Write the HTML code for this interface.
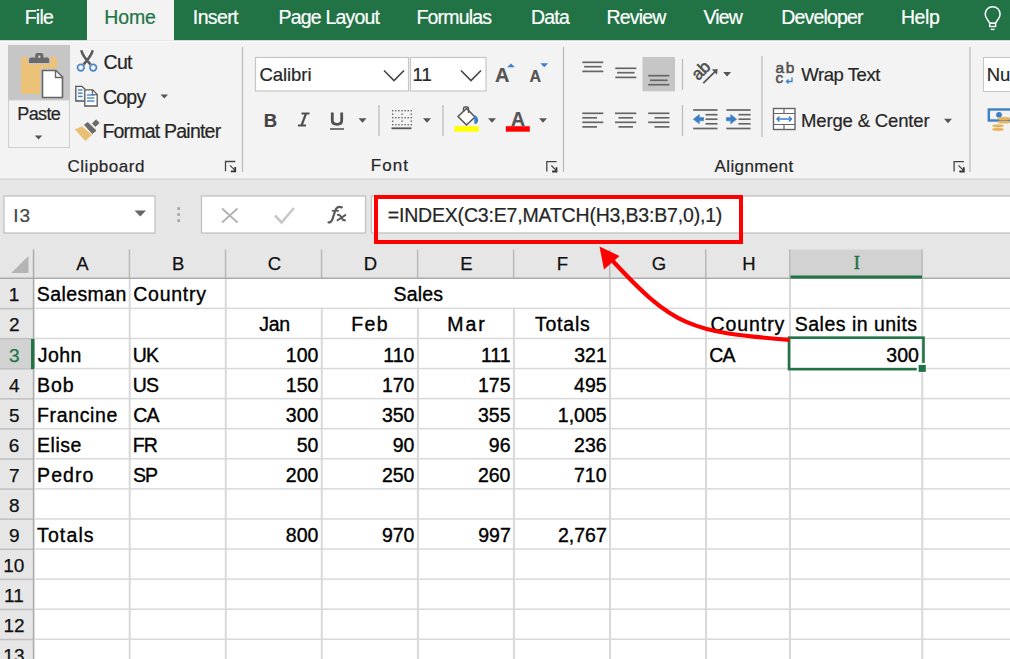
<!DOCTYPE html>
<html><head><meta charset="utf-8"><style>
html,body{margin:0;padding:0;}
body{width:1010px;height:659px;overflow:hidden;position:relative;background:#fff;font-family:"Liberation Sans",sans-serif;}
svg{position:absolute;left:0;top:0;}
.t{position:absolute;white-space:nowrap;line-height:normal;font-family:"Liberation Sans",sans-serif;-webkit-text-stroke-width:0.2px;}
#ov{position:absolute;left:0;top:0;width:1010px;height:659px;}
</style></head><body>
<svg width="1010" height="659" viewBox="0 0 1010 659">
<rect x="0" y="0" width="1010" height="40.6" fill="#217346" />
<rect x="87" y="0" width="87" height="40.6" fill="#f3f3f3" />
<rect x="0" y="40.6" width="1010" height="138.4" fill="#f3f3f3" />
<rect x="0" y="178.5" width="1010" height="1.5" fill="#d5d5d5" />
<rect x="0" y="180" width="1010" height="479" fill="#e6e6e6" />
<path d="M989.7 23.3 C988.5 20.2 985.2 18.2 985.2 14.3 C985.2 9.6 988.6 6.8 992.65 6.8 C996.7 6.8 1000.1 9.6 1000.1 14.3 C1000.1 18.2 996.8 20.2 995.6 23.3 Z" fill="none" stroke="#fff" stroke-width="1.5" stroke-linejoin="round"/>
<rect x="989.7" y="23.3" width="5.9" height="3.2" fill="none" stroke="#fff" stroke-width="1.4"/>
<line x1="990.8" y1="29.4" x2="994.6" y2="29.4" stroke="#fff" stroke-width="1.4" />
<rect x="0" y="40.6" width="1010" height="1.4" fill="#fbfbfb" />
<rect x="8" y="45" width="62" height="55" fill="#c6c6c6" />
<rect x="8.5" y="100" width="61" height="47.5" fill="#f3f3f3" stroke="#cfcfcf" stroke-width="1"/>
<rect x="21" y="57" width="36" height="37" rx="2" fill="#ebc277"/>
<path d="M29 63 L29 59.5 Q29 57.5 31 57.5 L35.2 57.5 L35.2 55 Q35.2 53 37.2 53 L41.4 53 Q43.4 53 43.4 55 L43.4 57.5 L47.2 57.5 Q49.2 57.5 49.2 59.5 L49.2 63 Z" fill="#c6c6c6" stroke="#c6c6c6" stroke-width="2.4"/>
<path d="M29 63 L29 59.5 Q29 57.5 31 57.5 L35.2 57.5 L35.2 55 Q35.2 53 37.2 53 L41.4 53 Q43.4 53 43.4 55 L43.4 57.5 L47.2 57.5 Q49.2 57.5 49.2 59.5 L49.2 63 Z" fill="#6a6a6a"/>
<circle cx="39.3" cy="56.8" r="1.2" fill="#d0d0d0"/>
<path d="M42.5 70.5 L56 70.5 L62.5 77 L62.5 97.5 L42.5 97.5 Z" fill="#fff" stroke="#c6c6c6" stroke-width="4.5" stroke-linejoin="round"/>
<path d="M42.5 70.5 L56 70.5 L62.5 77 L62.5 97.5 L42.5 97.5 Z" fill="#fff" stroke="#666" stroke-width="1.6" stroke-linejoin="round"/>
<path d="M55.5 70.5 L55.5 77.5 L62.5 77.5" fill="none" stroke="#666" stroke-width="1.4"/>
<path d="M34.75 135.5 L42.25 135.5 L38.5 139.5 Z" fill="#555"/>
<path d="M81.3 50.3 Q82.5 56 90.5 64.5 M92.7 50.3 Q91.5 56 83.5 64.5" stroke="#5a5a5a" stroke-width="2.6" fill="none"/>
<circle cx="80.8" cy="67.6" r="3.3" fill="none" stroke="#4a86c8" stroke-width="1.7"/>
<circle cx="93.2" cy="67.6" r="3.3" fill="none" stroke="#4a86c8" stroke-width="1.7"/>
<path d="M84.5 101 L75.8 101 L75.8 86.3 L82 86.3 L85 89.3" fill="none" stroke="#555" stroke-width="1.3"/>
<path d="M84.8 89.8 L92.6 89.8 L97.2 94.4 L97.2 106 L84.8 106 Z" fill="#fff" stroke="#555" stroke-width="1.3"/>
<path d="M92.3 89.8 L92.3 94.7 L97.2 94.7" fill="none" stroke="#555" stroke-width="1.1"/>
<line x1="78" y1="90" x2="82.5" y2="90" stroke="#3c7fc5" stroke-width="1.3" />
<line x1="78" y1="93.2" x2="82.5" y2="93.2" stroke="#3c7fc5" stroke-width="1.3" />
<line x1="78" y1="96.4" x2="82.5" y2="96.4" stroke="#3c7fc5" stroke-width="1.3" />
<line x1="86.8" y1="95" x2="94.4" y2="95" stroke="#3c7fc5" stroke-width="1.3" />
<line x1="86.8" y1="98" x2="94.4" y2="98" stroke="#3c7fc5" stroke-width="1.3" />
<line x1="86.8" y1="101" x2="94.4" y2="101" stroke="#3c7fc5" stroke-width="1.3" />
<path d="M160.55 94.5 L168.05 94.5 L164.3 98.5 Z" fill="#555"/>
<path d="M75.3 129.5 L82 126.8 L91.6 134.8 L85.5 140.8 Z" fill="#e9bf73" stroke="#e9bf73" stroke-width="0.8" stroke-linejoin="round"/>
<path d="M84.5 124.8 L87.8 122.6 L96 130.6 L92.3 133.5 Z" fill="#6a6a6a" stroke="#6a6a6a" stroke-width="1" stroke-linejoin="round"/>
<path d="M92.3 123.5 L96 119.8 L99.2 122.8 L95.4 126.6 Z" fill="#6a6a6a" stroke="#6a6a6a" stroke-width="0.8" stroke-linejoin="round"/>
<path d="M225.5 171.3 L225.5 161.5 L235.3 161.5" fill="none" stroke="#444" stroke-width="1.3"/>
<path d="M230 165.3 L234.8 170.2" fill="none" stroke="#444" stroke-width="1.2"/>
<path d="M235.2 167 L235.2 171.3 L230.8 171.3" fill="none" stroke="#333" stroke-width="1.8"/>
<line x1="242.5" y1="47" x2="242.5" y2="172" stroke="#bababa" stroke-width="1.2" />
<line x1="563.5" y1="47" x2="563.5" y2="172" stroke="#bababa" stroke-width="1.2" />
<line x1="970" y1="47" x2="970" y2="172" stroke="#bababa" stroke-width="1.2" />
<rect x="255.5" y="57.5" width="153" height="33.5" fill="#fff" stroke="#c6c6c6" stroke-width="1.2"/>
<rect x="410.5" y="57.5" width="75.5" height="33.5" fill="#fff" stroke="#c6c6c6" stroke-width="1.2"/>
<path d="M384 70.5 L394 80.5 L404 70.5" fill="none" stroke="#444" stroke-width="1.6"/>
<path d="M461 70.5 L471 80.5 L481 70.5" fill="none" stroke="#444" stroke-width="1.6"/>
<path d="M507.2 67.2 L511 63.4 L514.9 67.2 Z" fill="#3c7fc5"/>
<path d="M540.3 63.2 L548.2 63.2 L544.25 67.3 Z" fill="#3c7fc5"/>
<path d="M301.5 113.5 L309.5 113.5 M298 125.5 L306 125.5 M306 113.5 L301.5 125.5" stroke="#505050" stroke-width="2.2" fill="none"/>
<path d="M332.3 112.5 L332.3 120.5 Q332.3 124.3 337 124.3 Q341.7 124.3 341.7 120.5 L341.7 112.5" fill="none" stroke="#505050" stroke-width="2.8"/>
<line x1="330" y1="129" x2="344" y2="129" stroke="#555" stroke-width="1.6" />
<path d="M358.5 118.25 L366.5 118.25 L362.5 122.75 Z" fill="#555"/>
<line x1="379" y1="105" x2="379" y2="136" stroke="#bababa" stroke-width="1.2" />
<rect x="392.0" y="110" width="1.4" height="1.4" fill="#666" />
<rect x="395.1" y="110" width="1.4" height="1.4" fill="#666" />
<rect x="398.2" y="110" width="1.4" height="1.4" fill="#666" />
<rect x="401.3" y="110" width="1.4" height="1.4" fill="#666" />
<rect x="404.4" y="110" width="1.4" height="1.4" fill="#666" />
<rect x="407.5" y="110" width="1.4" height="1.4" fill="#666" />
<rect x="410.6" y="110" width="1.4" height="1.4" fill="#666" />
<rect x="392.0" y="117" width="1.4" height="1.4" fill="#666" />
<rect x="395.1" y="117" width="1.4" height="1.4" fill="#666" />
<rect x="398.2" y="117" width="1.4" height="1.4" fill="#666" />
<rect x="401.3" y="117" width="1.4" height="1.4" fill="#666" />
<rect x="404.4" y="117" width="1.4" height="1.4" fill="#666" />
<rect x="407.5" y="117" width="1.4" height="1.4" fill="#666" />
<rect x="410.6" y="117" width="1.4" height="1.4" fill="#666" />
<rect x="392.0" y="124" width="1.4" height="1.4" fill="#666" />
<rect x="395.1" y="124" width="1.4" height="1.4" fill="#666" />
<rect x="398.2" y="124" width="1.4" height="1.4" fill="#666" />
<rect x="401.3" y="124" width="1.4" height="1.4" fill="#666" />
<rect x="404.4" y="124" width="1.4" height="1.4" fill="#666" />
<rect x="407.5" y="124" width="1.4" height="1.4" fill="#666" />
<rect x="410.6" y="124" width="1.4" height="1.4" fill="#666" />
<rect x="392" y="113.5" width="1.4" height="1.4" fill="#666" />
<rect x="392" y="120.5" width="1.4" height="1.4" fill="#666" />
<rect x="401.3" y="113.5" width="1.4" height="1.4" fill="#666" />
<rect x="401.3" y="120.5" width="1.4" height="1.4" fill="#666" />
<rect x="410.6" y="113.5" width="1.4" height="1.4" fill="#666" />
<rect x="410.6" y="120.5" width="1.4" height="1.4" fill="#666" />
<line x1="391.5" y1="128.3" x2="411.5" y2="128.3" stroke="#555" stroke-width="1.8" />
<path d="M423.0 118.25 L431.0 118.25 L427 122.75 Z" fill="#555"/>
<line x1="443" y1="105" x2="443" y2="136" stroke="#bababa" stroke-width="1.2" />
<path d="M458 116.5 L466.5 108.5 L475 117 L466.5 125 Z" fill="#fff" stroke="#555" stroke-width="1.6" stroke-linejoin="round"/>
<path d="M463.5 112 L463.5 108.5 Q463.5 107 465 107 L467 107 Q468.5 107 468.5 108.5 L468.5 113" fill="none" stroke="#555" stroke-width="1.4"/>
<path d="M474 115 Q478.5 116 478 121.5 Q477 124.5 474.5 124 Z" fill="#3c7fc5"/>
<rect x="454.3" y="126.2" width="24.5" height="5.5" fill="#ffff00" />
<path d="M488.0 118.25 L496.0 118.25 L492 122.75 Z" fill="#555"/>
<rect x="505.8" y="126.2" width="24" height="5.5" fill="#ff0000" />
<path d="M539.0 118.25 L547.0 118.25 L543 122.75 Z" fill="#555"/>
<path d="M546.8 171.5 L546.8 161.7 L556.5999999999999 161.7" fill="none" stroke="#444" stroke-width="1.3"/>
<path d="M551.3 165.5 L556.0999999999999 170.39999999999998" fill="none" stroke="#444" stroke-width="1.2"/>
<path d="M556.5 167.2 L556.5 171.5 L552.0999999999999 171.5" fill="none" stroke="#333" stroke-width="1.8"/>
<line x1="582.3" y1="62.3" x2="603.3" y2="62.3" stroke="#666" stroke-width="1.7" />
<line x1="584.0999999999999" y1="66.7" x2="601.5" y2="66.7" stroke="#666" stroke-width="1.7" />
<line x1="582.3" y1="71.4" x2="603.3" y2="71.4" stroke="#666" stroke-width="1.7" />
<line x1="615.3" y1="68.3" x2="636.3" y2="68.3" stroke="#666" stroke-width="1.7" />
<line x1="617.0999999999999" y1="72.7" x2="634.5" y2="72.7" stroke="#666" stroke-width="1.7" />
<line x1="615.3" y1="77.4" x2="636.3" y2="77.4" stroke="#666" stroke-width="1.7" />
<rect x="642.5" y="57" width="32.5" height="34.3" fill="#c6c6c6" />
<line x1="648.2" y1="75.7" x2="669.4" y2="75.7" stroke="#666" stroke-width="1.7" />
<line x1="650.0" y1="80.3" x2="667.6" y2="80.3" stroke="#666" stroke-width="1.7" />
<line x1="648.2" y1="84.7" x2="669.4" y2="84.7" stroke="#666" stroke-width="1.7" />
<line x1="682.5" y1="59" x2="682.5" y2="90" stroke="#bababa" stroke-width="1.2" />
<g transform="translate(701.2 69.8) rotate(-45)"><text x="-10" y="5.8" font-family="Liberation Sans" font-size="17" fill="#505050" stroke="#505050" stroke-width="0.6" letter-spacing="-0.3">ab</text></g>
<path d="M703.3 83.2 L714.8 71.8" fill="none" stroke="#555" stroke-width="1.7"/>
<path d="M717.6 68.9 L711.8 69.5 L717 74.7 Z" fill="#555"/>
<path d="M723.1 72.05 L731.1 72.05 L727.1 76.55 Z" fill="#555"/>
<line x1="762" y1="56" x2="762" y2="137" stroke="#bababa" stroke-width="1.2" />
<path d="M792 77.5 L792 81.5 L786.5 81.5 M788.5 79.5 L786.5 81.5 L788.5 83.5" fill="none" stroke="#3c7fc5" stroke-width="1.3"/>
<line x1="582.3" y1="113.3" x2="603.3" y2="113.3" stroke="#666" stroke-width="1.7" />
<line x1="582.3" y1="117.8" x2="597" y2="117.8" stroke="#666" stroke-width="1.7" />
<line x1="582.3" y1="122.3" x2="603.3" y2="122.3" stroke="#666" stroke-width="1.7" />
<line x1="582.3" y1="126.9" x2="597" y2="126.9" stroke="#666" stroke-width="1.7" />
<line x1="615" y1="113.3" x2="636.3" y2="113.3" stroke="#666" stroke-width="1.7" />
<line x1="618.5" y1="117.8" x2="633" y2="117.8" stroke="#666" stroke-width="1.7" />
<line x1="615" y1="122.3" x2="636.3" y2="122.3" stroke="#666" stroke-width="1.7" />
<line x1="618.5" y1="126.9" x2="633" y2="126.9" stroke="#666" stroke-width="1.7" />
<line x1="648.2" y1="113.3" x2="669.4" y2="113.3" stroke="#666" stroke-width="1.7" />
<line x1="654.5" y1="117.8" x2="669.4" y2="117.8" stroke="#666" stroke-width="1.7" />
<line x1="648.2" y1="122.3" x2="669.4" y2="122.3" stroke="#666" stroke-width="1.7" />
<line x1="654.5" y1="126.9" x2="669.4" y2="126.9" stroke="#666" stroke-width="1.7" />
<line x1="682.5" y1="105" x2="682.5" y2="136" stroke="#bababa" stroke-width="1.2" />
<line x1="693.2" y1="110" x2="717.5" y2="110" stroke="#666" stroke-width="1.7" />
<line x1="693.2" y1="128.5" x2="717.5" y2="128.5" stroke="#666" stroke-width="1.7" />
<line x1="705.5" y1="114.7" x2="717.5" y2="114.7" stroke="#666" stroke-width="1.7" />
<line x1="705.5" y1="119.2" x2="717.5" y2="119.2" stroke="#666" stroke-width="1.7" />
<line x1="705.5" y1="123.8" x2="717.5" y2="123.8" stroke="#666" stroke-width="1.7" />
<path d="M693.3 119.2 L699.3 114.6 L699.3 117.6 L703.6 117.6 L703.6 120.8 L699.3 120.8 L699.3 123.8 Z" fill="#3c7fc5" stroke="#3c7fc5" stroke-width="0.6" stroke-linejoin="round"/>
<line x1="726.4" y1="110" x2="750.6" y2="110" stroke="#666" stroke-width="1.7" />
<line x1="726.4" y1="128.5" x2="750.6" y2="128.5" stroke="#666" stroke-width="1.7" />
<line x1="738.5" y1="114.7" x2="750.6" y2="114.7" stroke="#666" stroke-width="1.7" />
<line x1="738.5" y1="119.2" x2="750.6" y2="119.2" stroke="#666" stroke-width="1.7" />
<line x1="738.5" y1="123.8" x2="750.6" y2="123.8" stroke="#666" stroke-width="1.7" />
<path d="M736.7 119.2 L730.7 114.6 L730.7 117.6 L726.4 117.6 L726.4 120.8 L730.7 120.8 L730.7 123.8 Z" fill="#3c7fc5" stroke="#3c7fc5" stroke-width="0.6" stroke-linejoin="round"/>
<rect x="773.5" y="108.5" width="21.5" height="21" fill="#fff" stroke="#666" stroke-width="1.4"/>
<path d="M773.5 113.5 L795 113.5 M773.5 124.5 L795 124.5 M784 108.5 L784 113.5 M784 124.5 L784 129.5" fill="none" stroke="#666" stroke-width="1.2"/>
<path d="M777 119 L791.5 119 M779.5 116.5 L777 119 L779.5 121.5 M789 116.5 L791.5 119 L789 121.5" fill="none" stroke="#3c7fc5" stroke-width="1.4"/>
<path d="M944.0 118.75 L952.0 118.75 L948 123.25 Z" fill="#555"/>
<path d="M954.1 171.5 L954.1 161.7 L963.9 161.7" fill="none" stroke="#444" stroke-width="1.3"/>
<path d="M958.6 165.5 L963.4 170.39999999999998" fill="none" stroke="#444" stroke-width="1.2"/>
<path d="M963.8000000000001 167.2 L963.8000000000001 171.5 L959.4 171.5" fill="none" stroke="#333" stroke-width="1.8"/>
<rect x="983.5" y="57.5" width="40" height="34" fill="#fff" stroke="#c6c6c6" stroke-width="1"/>
<rect x="988.8" y="109.5" width="24" height="11" fill="none" stroke="#3c7fc5" stroke-width="2.4"/>
<circle cx="999" cy="114.8" r="2.9" fill="#3c7fc5"/>
<ellipse cx="1004" cy="118.5" rx="6.5" ry="1.6" fill="#e8b45c"/>
<ellipse cx="1004" cy="122" rx="6.5" ry="1.6" fill="#e8b45c"/>
<ellipse cx="998" cy="125.8" rx="6" ry="1.6" fill="#e8b45c"/>
<ellipse cx="998" cy="129.4" rx="6" ry="1.6" fill="#e8b45c"/>
<rect x="4" y="196" width="151" height="37" fill="#fff" stroke="#c2c2c2" stroke-width="1.3"/>
<path d="M134.5 210.5 L146 210.5 L140.25 216.5 Z" fill="#666"/>
<rect x="177.3" y="207.25" width="2.7" height="2.7" fill="#a6a6a6" />
<rect x="177.3" y="213.15" width="2.7" height="2.7" fill="#a6a6a6" />
<rect x="177.3" y="219.25" width="2.7" height="2.7" fill="#a6a6a6" />
<rect x="201.5" y="196" width="164" height="37" fill="#fff" stroke="#c2c2c2" stroke-width="1.3"/>
<path d="M222 208.5 L237.5 222.5 M237.5 208.5 L222 222.5" stroke="#b4b4b4" stroke-width="2"/>
<path d="M275 215.5 L281.5 222.5 L294 208" fill="none" stroke="#c8c8c8" stroke-width="2.6"/>
<path d="M328.6 222.3 Q331.6 223 333 217.5 L335.3 210.5 Q337 205.6 341.8 207.3" fill="none" stroke="#5a5a5a" stroke-width="2.3" stroke-linecap="round"/>
<path d="M331.8 210.8 L338.8 210.8" stroke="#5a5a5a" stroke-width="1.7"/>
<path d="M337 215 Q339.8 213.8 341.3 217.3 Q342.8 220.9 345.8 220.2 M346 214.6 L336.8 220.8" fill="none" stroke="#5a5a5a" stroke-width="1.9"/>
<rect x="371.5" y="196" width="700" height="37" fill="#fff" stroke="#c2c2c2" stroke-width="1.3"/>
<rect x="376" y="197" width="365" height="45" fill="none" stroke="#ff0000" stroke-width="4"/>
<rect x="34.5" y="279" width="975.5" height="380" fill="#ffffff" />
<path d="M28.5 256 L28.5 273 L11.2 273 Z" fill="#b4b4b4"/>
<rect x="790.5" y="249.5" width="131.5" height="28" fill="#d2d2d2" />
<rect x="128.7" y="249.5" width="1.5" height="28.5" fill="#b8b8b8" />
<rect x="224.8" y="249.5" width="1.5" height="28.5" fill="#b8b8b8" />
<rect x="320.8" y="249.5" width="1.5" height="28.5" fill="#b8b8b8" />
<rect x="416.9" y="249.5" width="1.5" height="28.5" fill="#b8b8b8" />
<rect x="512.9" y="249.5" width="1.5" height="28.5" fill="#b8b8b8" />
<rect x="609" y="249.5" width="1.5" height="28.5" fill="#b8b8b8" />
<rect x="705" y="249.5" width="1.5" height="28.5" fill="#b8b8b8" />
<rect x="789" y="249.5" width="1.5" height="28.5" fill="#b8b8b8" />
<rect x="921.3" y="249.5" width="1.5" height="28.5" fill="#b8b8b8" />
<rect x="0" y="277.5" width="1010" height="1.5" fill="#ababab" />
<rect x="790.5" y="275.5" width="131.5" height="3" fill="#217346" />
<rect x="0" y="338.96000000000004" width="32" height="30" fill="#d2d2d2" />
<rect x="0" y="307.88" width="33" height="1.5" fill="#c0c0c0" />
<rect x="0" y="337.96000000000004" width="33" height="1.5" fill="#c0c0c0" />
<rect x="0" y="368.04" width="33" height="1.5" fill="#c0c0c0" />
<rect x="0" y="398.12" width="33" height="1.5" fill="#c0c0c0" />
<rect x="0" y="428.2" width="33" height="1.5" fill="#c0c0c0" />
<rect x="0" y="458.28" width="33" height="1.5" fill="#c0c0c0" />
<rect x="0" y="488.36" width="33" height="1.5" fill="#c0c0c0" />
<rect x="0" y="518.44" width="33" height="1.5" fill="#c0c0c0" />
<rect x="0" y="548.52" width="33" height="1.5" fill="#c0c0c0" />
<rect x="0" y="578.5999999999999" width="33" height="1.5" fill="#c0c0c0" />
<rect x="0" y="608.6800000000001" width="33" height="1.5" fill="#c0c0c0" />
<rect x="0" y="638.76" width="33" height="1.5" fill="#c0c0c0" />
<rect x="0" y="668.8399999999999" width="33" height="1.5" fill="#c0c0c0" />
<rect x="32.8" y="249.5" width="1.5" height="409.5" fill="#ababab" />
<rect x="31" y="338.96000000000004" width="3.5" height="30.2" fill="#217346" />
<rect x="128.7" y="279" width="2" height="380" fill="#d9d9d9" />
<rect x="224.8" y="279" width="2" height="380" fill="#d9d9d9" />
<rect x="320.8" y="308.38" width="2" height="350.62" fill="#d9d9d9" />
<rect x="416.9" y="308.38" width="2" height="350.62" fill="#d9d9d9" />
<rect x="512.9" y="308.38" width="2" height="350.62" fill="#d9d9d9" />
<rect x="609" y="279" width="2" height="380" fill="#d9d9d9" />
<rect x="705" y="279" width="2" height="380" fill="#d9d9d9" />
<rect x="789" y="279" width="2" height="380" fill="#d9d9d9" />
<rect x="921.3" y="279" width="2" height="380" fill="#d9d9d9" />
<rect x="34.5" y="307.63" width="975.5" height="1.5" fill="#d9d9d9" />
<rect x="34.5" y="337.71000000000004" width="975.5" height="1.5" fill="#d9d9d9" />
<rect x="34.5" y="367.79" width="975.5" height="1.5" fill="#d9d9d9" />
<rect x="34.5" y="397.87" width="975.5" height="1.5" fill="#d9d9d9" />
<rect x="34.5" y="427.95" width="975.5" height="1.5" fill="#d9d9d9" />
<rect x="34.5" y="458.03" width="975.5" height="1.5" fill="#d9d9d9" />
<rect x="34.5" y="488.11" width="975.5" height="1.5" fill="#d9d9d9" />
<rect x="34.5" y="518.19" width="975.5" height="1.5" fill="#d9d9d9" />
<rect x="34.5" y="548.27" width="975.5" height="1.5" fill="#d9d9d9" />
<rect x="34.5" y="578.3499999999999" width="975.5" height="1.5" fill="#d9d9d9" />
<rect x="34.5" y="608.4300000000001" width="975.5" height="1.5" fill="#d9d9d9" />
<rect x="34.5" y="638.51" width="975.5" height="1.5" fill="#d9d9d9" />
<rect x="34.5" y="668.5899999999999" width="975.5" height="1.5" fill="#d9d9d9" />
<rect x="789" y="337.66" width="134.5" height="31.5" fill="none" stroke="#217346" stroke-width="2.6"/>
<rect x="916.8" y="362.9" width="9.3" height="9.3" fill="#ffffff" />
<rect x="918.6" y="364.9" width="7.2" height="7" fill="#217346" />
</svg>
<div class="t" style="left:24.74px;top:6.33px;font-size:19.5px;color:#ffffff;letter-spacing:-0.800px;">File</div>
<div class="t" style="left:192.84px;top:6.33px;font-size:19.5px;color:#ffffff;letter-spacing:-0.619px;">Insert</div>
<div class="t" style="left:278.54px;top:6.33px;font-size:19.5px;color:#ffffff;letter-spacing:-0.800px;">Page Layout</div>
<div class="t" style="left:416.44px;top:6.33px;font-size:19.5px;color:#ffffff;letter-spacing:-0.800px;">Formulas</div>
<div class="t" style="left:531.04px;top:6.33px;font-size:19.5px;color:#ffffff;letter-spacing:-0.800px;">Data</div>
<div class="t" style="left:606.44px;top:6.33px;font-size:19.5px;color:#ffffff;letter-spacing:-0.800px;">Review</div>
<div class="t" style="left:703.40px;top:6.33px;font-size:19.5px;color:#ffffff;letter-spacing:-0.800px;">View</div>
<div class="t" style="left:781.14px;top:6.33px;font-size:19.5px;color:#ffffff;letter-spacing:-0.800px;">Developer</div>
<div class="t" style="left:900.94px;top:6.33px;font-size:19.5px;color:#ffffff;letter-spacing:-0.411px;">Help</div>
<div class="t" style="left:104.24px;top:6.33px;font-size:19.5px;color:#217346;letter-spacing:-0.110px;">Home</div>
<div class="t" style="left:17.26px;top:104.41px;font-size:18px;color:#262626;letter-spacing:-0.610px;">Paste</div>
<div class="t" style="left:103.62px;top:51.03px;font-size:19.5px;color:#262626;letter-spacing:-0.800px;">Cut</div>
<div class="t" style="left:103.03px;top:86.43px;font-size:19.5px;color:#262626;letter-spacing:-0.800px;">Copy</div>
<div class="t" style="left:102.44px;top:120.03px;font-size:19.5px;color:#262626;letter-spacing:-0.788px;">Format Painter</div>
<div class="t" style="left:67.45px;top:157.03px;font-size:17px;color:#262626;letter-spacing:0.537px;">Clipboard</div>
<div class="t" style="left:259.38px;top:63.75px;font-size:18.5px;color:#262626;letter-spacing:-0.038px;">Calibri</div>
<div class="t" style="left:412.51px;top:63.75px;font-size:18.5px;color:#262626;letter-spacing:0.173px;">11</div>
<div class="t" style="left:495.10px;top:64.07px;font-size:20px;color:#555;font-weight:bold;">A</div>
<div class="t" style="left:529.60px;top:67.76px;font-size:16px;color:#555;font-weight:bold;">A</div>
<div class="t" style="left:263.80px;top:110.25px;font-size:18.5px;color:#444;font-weight:bold;">B</div>
<div class="t" style="left:511.01px;top:107.53px;font-size:19.5px;color:#555;font-weight:bold;">A</div>
<div class="t" style="left:370.64px;top:156.33px;font-size:17px;color:#262626;letter-spacing:1.148px;">Font</div>
<div class="t" style="left:775.38px;top:58.72px;font-size:15.5px;color:#505050;letter-spacing:1.635px;-webkit-text-stroke-width:0.5px;">ab</div>
<div class="t" style="left:775.38px;top:69.42px;font-size:15.5px;color:#505050;-webkit-text-stroke-width:0.5px;">c</div>
<div class="t" style="left:801.31px;top:63.95px;font-size:18.5px;color:#262626;letter-spacing:-0.441px;">Wrap Text</div>
<div class="t" style="left:801.02px;top:110.35px;font-size:18.5px;color:#262626;letter-spacing:-0.158px;">Merge &amp; Center</div>
<div class="t" style="left:714.60px;top:157.23px;font-size:17px;color:#262626;letter-spacing:0.365px;">Alignment</div>
<div class="t" style="left:986.72px;top:64.45px;font-size:18.5px;color:#262626;">Nu</div>
<div class="t" style="left:13.29px;top:204.79px;font-size:19px;color:#444;letter-spacing:0.905px;">I3</div>
<div class="t" style="left:387.72px;top:204.23px;font-size:19.5px;color:#262626;letter-spacing:-0.182px;">=INDEX(C3:E7,MATCH(H3,B3:B7,0),1)</div>
<div class="t" style="left:76.30px;top:252.65px;font-size:18.5px;color:#111;-webkit-text-stroke:0.25px #111;">A</div>
<div class="t" style="left:172.12px;top:252.65px;font-size:18.5px;color:#111;-webkit-text-stroke:0.25px #111;">B</div>
<div class="t" style="left:267.80px;top:252.65px;font-size:18.5px;color:#111;-webkit-text-stroke:0.25px #111;">C</div>
<div class="t" style="left:363.67px;top:252.65px;font-size:18.5px;color:#111;-webkit-text-stroke:0.25px #111;">D</div>
<div class="t" style="left:460.18px;top:252.65px;font-size:18.5px;color:#111;-webkit-text-stroke:0.25px #111;">E</div>
<div class="t" style="left:556.74px;top:252.65px;font-size:18.5px;color:#111;-webkit-text-stroke:0.25px #111;">F</div>
<div class="t" style="left:651.82px;top:252.65px;font-size:18.5px;color:#111;-webkit-text-stroke:0.25px #111;">G</div>
<div class="t" style="left:742.14px;top:252.65px;font-size:18.5px;color:#111;-webkit-text-stroke:0.25px #111;">H</div>
<div class="t" style="left:853.85px;top:252.65px;font-size:18.5px;color:#217346;font-family:'Liberation Serif';-webkit-text-stroke:0.5px #217346;">I</div>
<div class="t" style="left:8.64px;top:284.37px;font-size:19px;color:#111;-webkit-text-stroke:0.25px #111;">1</div>
<div class="t" style="left:8.93px;top:314.45px;font-size:19px;color:#111;-webkit-text-stroke:0.25px #111;">2</div>
<div class="t" style="left:8.93px;top:344.53px;font-size:19px;color:#217346;-webkit-text-stroke:0.25px #217346;">3</div>
<div class="t" style="left:9.02px;top:374.61px;font-size:19px;color:#111;-webkit-text-stroke:0.25px #111;">4</div>
<div class="t" style="left:8.93px;top:404.69px;font-size:19px;color:#111;-webkit-text-stroke:0.25px #111;">5</div>
<div class="t" style="left:8.83px;top:434.77px;font-size:19px;color:#111;-webkit-text-stroke:0.25px #111;">6</div>
<div class="t" style="left:8.93px;top:464.85px;font-size:19px;color:#111;-webkit-text-stroke:0.25px #111;">7</div>
<div class="t" style="left:8.88px;top:494.93px;font-size:19px;color:#111;-webkit-text-stroke:0.25px #111;">8</div>
<div class="t" style="left:8.93px;top:525.01px;font-size:19px;color:#111;-webkit-text-stroke:0.25px #111;">9</div>
<div class="t" style="left:3.28px;top:555.09px;font-size:19px;color:#111;-webkit-text-stroke:0.25px #111;">10</div>
<div class="t" style="left:4.08px;top:585.17px;font-size:19px;color:#111;-webkit-text-stroke:0.25px #111;">11</div>
<div class="t" style="left:3.42px;top:615.25px;font-size:19px;color:#111;-webkit-text-stroke:0.25px #111;">12</div>
<div class="t" style="left:3.32px;top:645.33px;font-size:19px;color:#111;-webkit-text-stroke:0.25px #111;">13</div>
<div class="t" style="left:36.72px;top:283.41px;font-size:19.5px;color:#000;letter-spacing:0.410px;-webkit-text-stroke:0.35px #000;">Salesman</div>
<div class="t" style="left:133.22px;top:283.41px;font-size:19.5px;color:#000;letter-spacing:0.754px;-webkit-text-stroke:0.35px #000;">Country</div>
<div class="t" style="left:393.42px;top:283.41px;font-size:19.5px;color:#000;letter-spacing:0.227px;-webkit-text-stroke:0.35px #000;">Sales</div>
<div class="t" style="left:259.31px;top:313.49px;font-size:19.5px;color:#000;letter-spacing:-0.268px;-webkit-text-stroke:0.35px #000;">Jan</div>
<div class="t" style="left:351.34px;top:313.49px;font-size:19.5px;color:#000;letter-spacing:1.300px;-webkit-text-stroke:0.35px #000;">Feb</div>
<div class="t" style="left:447.24px;top:313.49px;font-size:19.5px;color:#000;letter-spacing:2.006px;-webkit-text-stroke:0.35px #000;">Mar</div>
<div class="t" style="left:534.91px;top:313.49px;font-size:19.5px;color:#000;letter-spacing:0.796px;-webkit-text-stroke:0.35px #000;">Totals</div>
<div class="t" style="left:710.42px;top:313.49px;font-size:19.5px;color:#000;letter-spacing:0.937px;-webkit-text-stroke:0.35px #000;">Country</div>
<div class="t" style="left:794.82px;top:313.49px;font-size:19.5px;color:#000;letter-spacing:0.480px;-webkit-text-stroke:0.35px #000;">Sales in units</div>
<div class="t" style="left:37.71px;top:343.57px;font-size:19.5px;color:#000;letter-spacing:0.481px;-webkit-text-stroke:0.35px #000;">John</div>
<div class="t" style="left:132.74px;top:343.57px;font-size:19.5px;color:#000;letter-spacing:-0.800px;-webkit-text-stroke:0.35px #000;">UK</div>
<div class="t" style="left:285.82px;top:343.57px;font-size:19.5px;color:#000;-webkit-text-stroke:0.35px #000;">100</div>
<div class="t" style="left:383.28px;top:343.57px;font-size:19.5px;color:#000;-webkit-text-stroke:0.35px #000;">110</div>
<div class="t" style="left:480.94px;top:343.57px;font-size:19.5px;color:#000;-webkit-text-stroke:0.35px #000;">111</div>
<div class="t" style="left:574.21px;top:343.57px;font-size:19.5px;color:#000;-webkit-text-stroke:0.35px #000;">321</div>
<div class="t" style="left:37.04px;top:373.65px;font-size:19.5px;color:#000;letter-spacing:0.915px;-webkit-text-stroke:0.35px #000;">Bob</div>
<div class="t" style="left:132.74px;top:373.65px;font-size:19.5px;color:#000;letter-spacing:-0.800px;-webkit-text-stroke:0.35px #000;">US</div>
<div class="t" style="left:285.82px;top:373.65px;font-size:19.5px;color:#000;-webkit-text-stroke:0.35px #000;">150</div>
<div class="t" style="left:381.91px;top:373.65px;font-size:19.5px;color:#000;-webkit-text-stroke:0.35px #000;">170</div>
<div class="t" style="left:478.01px;top:373.65px;font-size:19.5px;color:#000;-webkit-text-stroke:0.35px #000;">175</div>
<div class="t" style="left:574.11px;top:373.65px;font-size:19.5px;color:#000;-webkit-text-stroke:0.35px #000;">495</div>
<div class="t" style="left:37.04px;top:403.73px;font-size:19.5px;color:#000;letter-spacing:0.640px;-webkit-text-stroke:0.35px #000;">Francine</div>
<div class="t" style="left:133.22px;top:403.73px;font-size:19.5px;color:#000;letter-spacing:-0.800px;-webkit-text-stroke:0.35px #000;">CA</div>
<div class="t" style="left:285.82px;top:403.73px;font-size:19.5px;color:#000;-webkit-text-stroke:0.35px #000;">300</div>
<div class="t" style="left:381.91px;top:403.73px;font-size:19.5px;color:#000;-webkit-text-stroke:0.35px #000;">350</div>
<div class="t" style="left:478.01px;top:403.73px;font-size:19.5px;color:#000;-webkit-text-stroke:0.35px #000;">355</div>
<div class="t" style="left:557.83px;top:403.73px;font-size:19.5px;color:#000;-webkit-text-stroke:0.35px #000;">1,005</div>
<div class="t" style="left:37.04px;top:433.81px;font-size:19.5px;color:#000;letter-spacing:0.530px;-webkit-text-stroke:0.35px #000;">Elise</div>
<div class="t" style="left:132.64px;top:433.81px;font-size:19.5px;color:#000;letter-spacing:-0.800px;-webkit-text-stroke:0.35px #000;">FR</div>
<div class="t" style="left:296.64px;top:433.81px;font-size:19.5px;color:#000;-webkit-text-stroke:0.35px #000;">50</div>
<div class="t" style="left:392.74px;top:433.81px;font-size:19.5px;color:#000;-webkit-text-stroke:0.35px #000;">90</div>
<div class="t" style="left:488.83px;top:433.81px;font-size:19.5px;color:#000;-webkit-text-stroke:0.35px #000;">96</div>
<div class="t" style="left:574.11px;top:433.81px;font-size:19.5px;color:#000;-webkit-text-stroke:0.35px #000;">236</div>
<div class="t" style="left:37.04px;top:463.89px;font-size:19.5px;color:#000;letter-spacing:1.093px;-webkit-text-stroke:0.35px #000;">Pedro</div>
<div class="t" style="left:132.92px;top:463.89px;font-size:19.5px;color:#000;letter-spacing:-0.800px;-webkit-text-stroke:0.35px #000;">SP</div>
<div class="t" style="left:285.82px;top:463.89px;font-size:19.5px;color:#000;-webkit-text-stroke:0.35px #000;">200</div>
<div class="t" style="left:381.91px;top:463.89px;font-size:19.5px;color:#000;-webkit-text-stroke:0.35px #000;">250</div>
<div class="t" style="left:477.91px;top:463.89px;font-size:19.5px;color:#000;-webkit-text-stroke:0.35px #000;">260</div>
<div class="t" style="left:574.01px;top:463.89px;font-size:19.5px;color:#000;-webkit-text-stroke:0.35px #000;">710</div>
<div class="t" style="left:709.32px;top:343.57px;font-size:19.5px;color:#000;letter-spacing:-0.800px;-webkit-text-stroke:0.35px #000;">CA</div>
<div class="t" style="left:886.31px;top:343.57px;font-size:19.5px;color:#000;-webkit-text-stroke:0.35px #000;">300</div>
<div class="t" style="left:37.01px;top:524.05px;font-size:19.5px;color:#000;letter-spacing:1.136px;-webkit-text-stroke:0.35px #000;">Totals</div>
<div class="t" style="left:285.82px;top:524.05px;font-size:19.5px;color:#000;-webkit-text-stroke:0.35px #000;">800</div>
<div class="t" style="left:381.91px;top:524.05px;font-size:19.5px;color:#000;-webkit-text-stroke:0.35px #000;">970</div>
<div class="t" style="left:478.21px;top:524.05px;font-size:19.5px;color:#000;-webkit-text-stroke:0.35px #000;">997</div>
<div class="t" style="left:558.02px;top:524.05px;font-size:19.5px;color:#000;-webkit-text-stroke:0.35px #000;">2,767</div>
<svg width="1010" height="659" viewBox="0 0 1010 659">
<path d="M789.5 339.8 C690.2 332.3 673.1 326.5 611 259" fill="none" stroke="#ff0000" stroke-width="4.2"/>
<path d="M599.5 246.5 L619.5 256 L604 269.5 Z" fill="#ff0000"/>
</svg>
</body></html>
